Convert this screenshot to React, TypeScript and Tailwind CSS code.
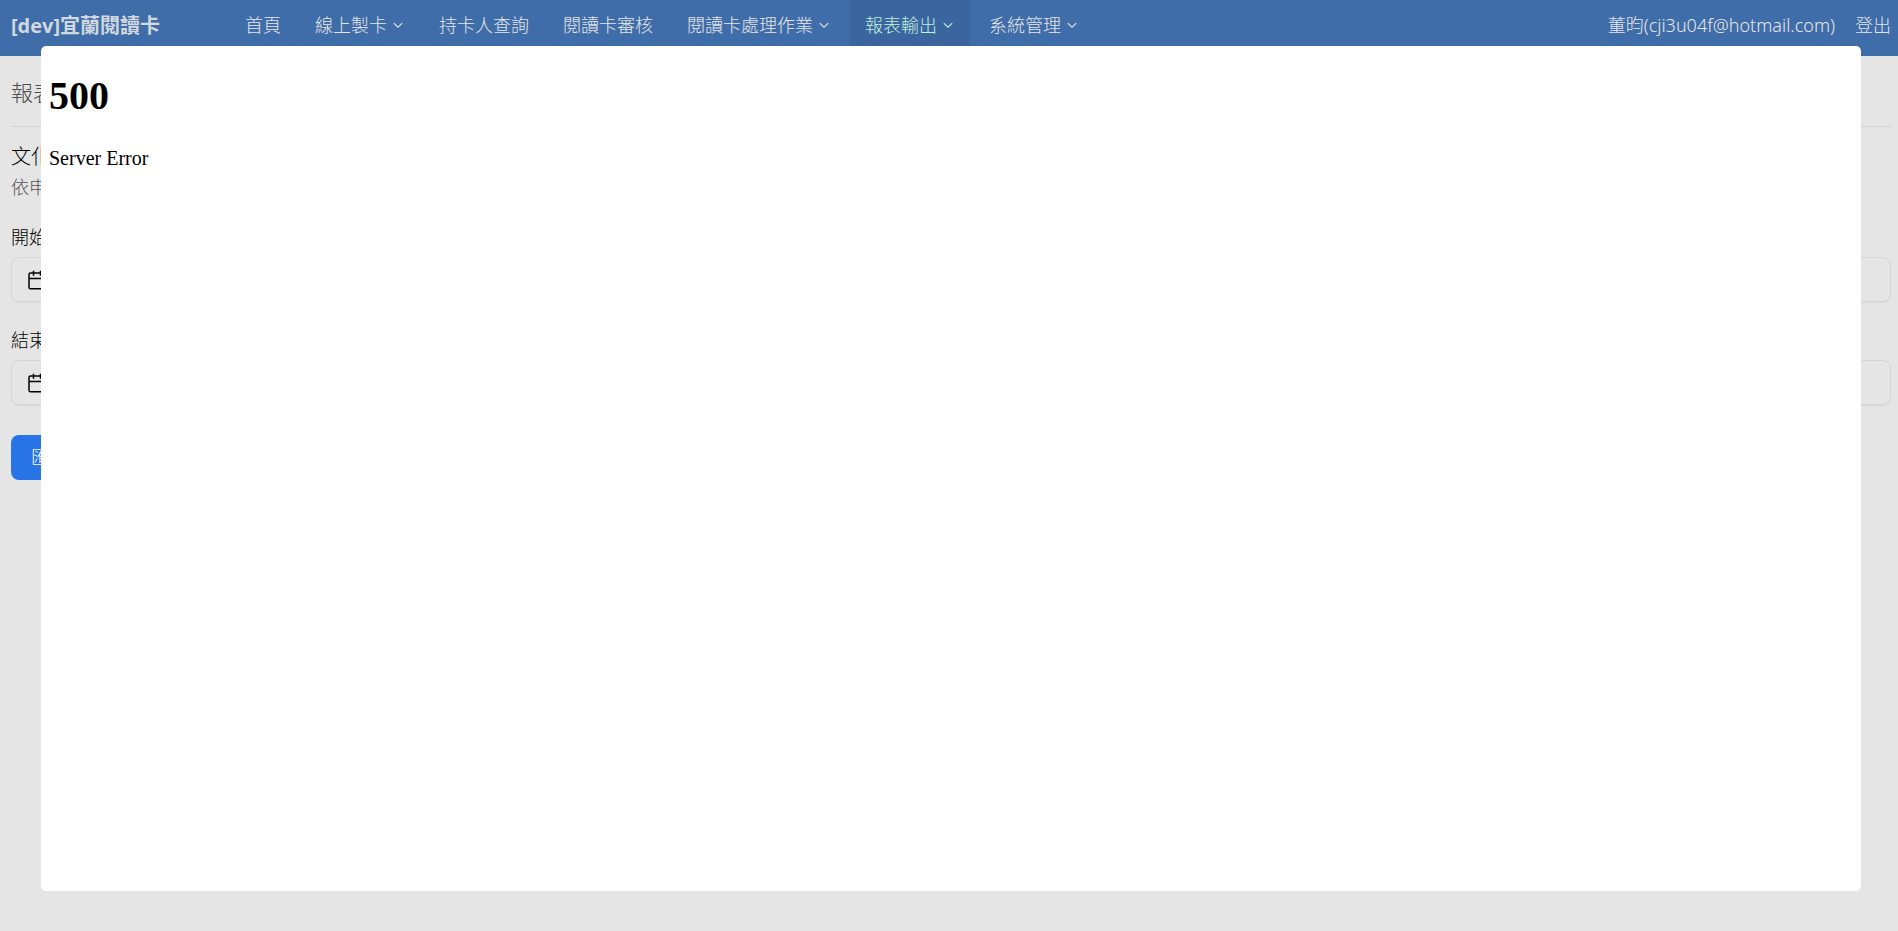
import React from 'react';

interface NavItem {
  label: string;
  dropdown?: boolean;
  active?: boolean;
}

const navItems: NavItem[] = [
  { label: '首頁' },
  { label: '線上製卡', dropdown: true },
  { label: '持卡人查詢' },
  { label: '閱讀卡審核' },
  { label: '閱讀卡處理作業', dropdown: true },
  { label: '報表輸出', dropdown: true, active: true },
  { label: '系統管理', dropdown: true },
];

const ChevronIcon: React.FC = () => (
  <svg className="mr-[2px] ml-[6px] h-[10px] w-[10px]" viewBox="0 0 10 10" fill="none" stroke="currentColor" strokeWidth="1.1">
    <path d="M0.8 3.200l4.200 4 4.200-4" />
  </svg>
);

const CalendarIcon: React.FC = () => (
  <svg className="h-5 w-[18px] shrink-0" viewBox="0 0 18 20" fill="none" stroke="#000000" strokeWidth="1.5">
    <rect x="1" y="3" width="16" height="15.8" rx="1.5" />
    <path d="M1 8.500h16M5.500 0.800v5M12.500 0.800v5" />
  </svg>
);

const NavEntry: React.FC<{ item: NavItem }> = ({ item }) => {
  const base = 'flex h-14 items-center px-[15px] pb-[6px]';
  if (item.dropdown) {
    return (
      <button
        type="button"
        className={`${base} ${item.active ? 'bg-[#3a659f] text-[#c0f0de]' : ''}`}
      >
        {item.label}
        <ChevronIcon />
      </button>
    );
  }
  return (
    <a href="#" className={base}>
      {item.label}
    </a>
  );
};

const DateField: React.FC<{ id: string; label: string }> = ({ id, label }) => (
  <div>
    <label htmlFor={id} className="block text-[18px] leading-6">
      {label}
    </label>
    <div className="mt-2 flex h-[45px] items-center rounded-lg border border-[#d6d6d6] px-4 shadow-xs">
      <CalendarIcon />
      <input id={id} type="text" className="ml-3 w-full bg-transparent outline-none" />
    </div>
  </div>
);

const ErrorDialog: React.FC = () => (
  <div className="fixed inset-0 pt-[46px] pr-[37px] pb-10 pl-[41px]">
    <div
      role="dialog"
      aria-label="Server Error"
      className="h-full rounded-[5px] bg-white px-2 pt-7 font-['Liberation_Serif',serif] text-black"
    >
      <h1 className="text-[40px] leading-11 font-bold">500</h1>
      <p className="mt-7 text-[20px] leading-6">Server Error</p>
    </div>
  </div>
);

const App: React.FC = () => {
  return (
    <div className="min-h-screen bg-[#e5e5e5] font-['Open_Sans','Noto_Sans_CJK_TC',sans-serif] text-[18px] text-black">
      <header className="flex h-14 items-center bg-[#3f6da9] pr-[7px] pl-[11px] text-[#e5e5e5]">
        <a href="#" className="w-[204px] pb-[5px] text-[20px] font-bold whitespace-nowrap text-[#d2d8df]">
          [dev]宜蘭閱讀卡
        </a>
        <nav className="ml-[15px] flex gap-1 font-light whitespace-nowrap">
          {navItems.map(item => (
            <NavEntry key={item.label} item={item} />
          ))}
        </nav>
        <div className="ml-auto flex items-center gap-5 pb-[6px] font-light whitespace-nowrap">
          <span className="font-['Noto_Sans','Noto_Sans_CJK_TC',sans-serif]">董昀(cji3u04f@hotmail.com)</span>
          <a href="#">登出</a>
        </div>
      </header>

      <main className="pr-[7px] pl-[11px] font-light">
        <h1 className="h-[71px] border-b border-[#d2d2d2] pt-5 text-[22px] leading-8 text-[#4d4d4d]">報表輸出</h1>
        <h2 className="mt-4 text-[20px] leading-7">文化局</h2>
        <p className="mt-1 text-[18px] leading-6 text-[#555555]">依申請日期</p>
        <form className="mt-[26px] flex flex-col gap-[26px]">
          <DateField id="start-date" label="開始日期" />
          <DateField id="end-date" label="結束日期" />
          <button type="submit" className="mt-1 h-[45px] self-start rounded-lg bg-[#2873e6] px-5 text-white">
            匯出
          </button>
        </form>
      </main>

      <ErrorDialog />
    </div>
  );
};

export default App;
